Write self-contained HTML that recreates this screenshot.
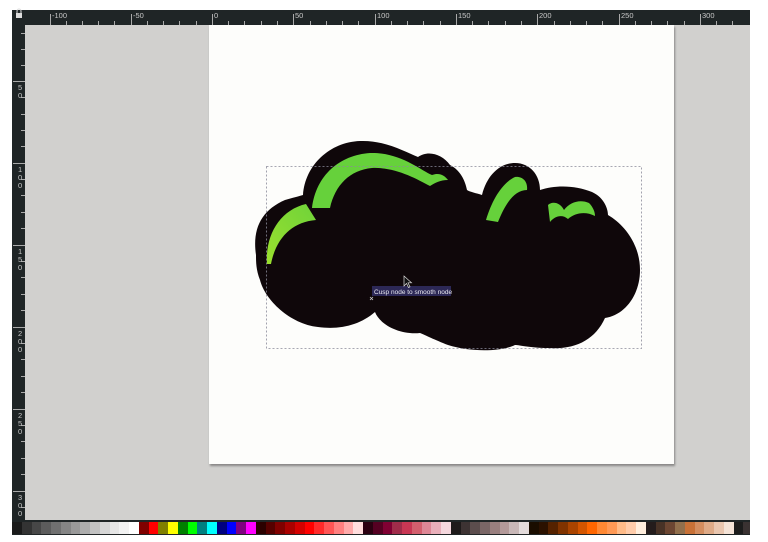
<!DOCTYPE html>
<html><head><style>
html,body{margin:0;padding:0;width:768px;height:542px;background:#fff;overflow:hidden;font-family:"Liberation Sans",sans-serif}
.frame{position:absolute;left:12px;top:10px;width:738px;height:525px;background:#1f2526}
.canvas{position:absolute;left:25px;top:25px;width:725px;height:495px;background:#d1d0ce}
.page{position:absolute;left:209px;top:25px;width:465px;height:439px;background:#fdfdfb;box-shadow:1px 2px 2px rgba(0,0,0,.35)}
.pal{position:absolute;left:12px;top:522px;height:12px;width:738px;display:flex;overflow:hidden}
.pal i{display:block;width:9.75px;height:12px;flex:none}
.rl{position:absolute;font-size:7.5px;color:#c8c8c8}
</style></head><body>
<div class="frame"></div>
<div class="canvas"></div>
<div class="page"></div>
<svg style="position:absolute;left:0;top:0" width="768" height="542">
<defs><linearGradient id="g1" x1="0" y1="1" x2="1" y2="0"><stop offset="0" stop-color="#9adf2e"/><stop offset="1" stop-color="#6fd33a"/></linearGradient></defs>
<rect x="16" y="13" width="6" height="5" fill="#ddd"/><path d="M17 13 v-2 a2 2 0 0 1 4 0 v2" stroke="#ddd" fill="none"/>
<path fill="#0f070a" d="M256,255 C252,228 262,210 285,200 C292,198 300,196 303,195 C305,165 330,142 360,141 C385,140 405,152 418,157 C428,150 442,154 450,165 C460,170 465,180 467,190 C470,192 476,193 482,195 C487,175 500,163 515,163 C530,163 540,175 540,190 C555,185 575,185 592,192 C605,198 608,210 608,215 C625,225 640,245 640,270 C640,295 625,315 605,318 C595,340 575,350 548,348 C530,348 520,345 515,345 C500,352 470,352 448,345 C435,340 425,335 420,333 C400,335 380,325 375,312 C360,325 340,330 318,327 C290,324 265,300 260,280 C256,270 256,262 256,255 Z"/>
<path fill="url(#g1)" d="M267,264 C265,235 280,210 306,204 L316,220 C292,222 276,238 271,264 Z"/>
<path fill="#66d13b" d="M312,208 C316,175 340,155 370,153 C400,152 420,170 432,175 C440,172 445,176 448,180 C440,180 435,183 430,186 C415,178 395,167 372,168 C350,170 335,185 330,208 Z"/>
<path fill="#66d13b" d="M486,220 C492,200 502,183 515,177 C523,176 528,182 527,190 C515,190 506,202 498,222 Z"/>
<path fill="#66d13b" d="M548,205 C552,201 560,202 564,210 C570,202 580,199 589,203 C593,207 595,212 595,216 C585,211 575,213 568,219 C562,214 555,216 550,222 Z"/>
<rect x="266.5" y="166.5" width="375" height="182" fill="none" stroke="#8a8a9a" stroke-width="0.8" stroke-dasharray="2,2"/>
<rect x="372" y="286" width="79" height="10" fill="#2c2856"/>
<text x="374" y="294" font-size="6.5" fill="#e8e8f0" font-family="Liberation Sans">Cusp node to smooth node</text>
<path d="M404 276 v10 l2.5-2.5 2 4 1.5-.7 -2-4 h3.5z" fill="#111" stroke="#ddd" stroke-width=".7"/>
<path d="M370 297 l3 3 M373 297 l-3 3" stroke="#ccc" stroke-width=".8"/>
<g stroke="#aaa" stroke-width="1">
<path d="M50.5 14v11M131.5 14v11M212.5 14v11M293.5 14v11M375.5 14v11M456.5 14v11M537.5 14v11M619.5 14v11M700.5 14v11"/>
<path d="M66.5 21v4M82.5 21v4M98.5 21v4M114.5 21v4M147.5 21v4M163.5 21v4M179.5 21v4M196.5 21v4M228.5 21v4M244.5 21v4M261.5 21v4M277.5 21v4M310.5 21v4M326.5 21v4M342.5 21v4M358.5 21v4M391.5 21v4M407.5 21v4M423.5 21v4M440.5 21v4M472.5 21v4M488.5 21v4M505.5 21v4M521.5 21v4M554.5 21v4M570.5 21v4M586.5 21v4M602.5 21v4M635.5 21v4M651.5 21v4M667.5 21v4M684.5 21v4M716.5 21v4M732.5 21v4"/>
<path d="M13 81.5h12M13 163.5h12M13 245.5h12M13 327.5h12M13 409.5h12M13 491.5h12"/>
<path d="M21 33.5h4M21 49.5h4M21 65.5h4M21 97.5h4M21 114.5h4M21 130.5h4M21 146.5h4M21 179.5h4M21 195.5h4M21 212.5h4M21 228.5h4M21 261.5h4M21 277.5h4M21 294.5h4M21 310.5h4M21 343.5h4M21 359.5h4M21 376.5h4M21 392.5h4M21 425.5h4M21 441.5h4M21 458.5h4M21 474.5h4M21 507.5h4"/>
</g>
</svg>
<div class="rl" style="left:52px;top:11px">-100</div>
<div class="rl" style="left:133px;top:11px">-50</div>
<div class="rl" style="left:214px;top:11px">0</div>
<div class="rl" style="left:295px;top:11px">50</div>
<div class="rl" style="left:377px;top:11px">100</div>
<div class="rl" style="left:458px;top:11px">150</div>
<div class="rl" style="left:539px;top:11px">200</div>
<div class="rl" style="left:621px;top:11px">250</div>
<div class="rl" style="left:702px;top:11px">300</div>
<div class="rl" style="left:18px;top:84px;line-height:8px">5<br>0</div>
<div class="rl" style="left:18px;top:166px;line-height:8px">1<br>0<br>0</div>
<div class="rl" style="left:18px;top:248px;line-height:8px">1<br>5<br>0</div>
<div class="rl" style="left:18px;top:330px;line-height:8px">2<br>0<br>0</div>
<div class="rl" style="left:18px;top:412px;line-height:8px">2<br>5<br>0</div>
<div class="rl" style="left:18px;top:494px;line-height:8px">3<br>0<br>0</div>
<div class="pal">
<i style="background:#1a1a1a"></i><i style="background:#333"></i><i style="background:#474747"></i><i style="background:#5c5c5c"></i><i style="background:#707070"></i><i style="background:#858585"></i><i style="background:#999"></i><i style="background:#adadad"></i><i style="background:#c2c2c2"></i><i style="background:#d6d6d6"></i><i style="background:#e6e6e6"></i><i style="background:#f2f2f2"></i><i style="background:#fff"></i>
<i style="background:#800000"></i><i style="background:#f00"></i><i style="background:#808000"></i><i style="background:#ff0"></i><i style="background:#008000"></i><i style="background:#0f0"></i><i style="background:#008080"></i><i style="background:#0ff"></i><i style="background:#000080"></i><i style="background:#00f"></i><i style="background:#800080"></i><i style="background:#f0f"></i>
<i style="background:#2b0000"></i><i style="background:#550000"></i><i style="background:#800000"></i><i style="background:#a00"></i><i style="background:#d40000"></i><i style="background:#f00"></i><i style="background:#ff2a2a"></i><i style="background:#f55"></i><i style="background:#ff8080"></i><i style="background:#faa"></i><i style="background:#fdd"></i>
<i style="background:#2b0011"></i><i style="background:#550022"></i><i style="background:#800033"></i><i style="background:#a02c4a"></i><i style="background:#c83754"></i><i style="background:#d35f6e"></i><i style="background:#de8796"></i><i style="background:#e9afba"></i><i style="background:#f4d7dd"></i>
<i style="background:#1e1a1a"></i><i style="background:#3d3333"></i><i style="background:#5c4d4d"></i><i style="background:#7a6666"></i><i style="background:#997f7f"></i><i style="background:#b39999"></i><i style="background:#c8b7b7"></i><i style="background:#e3dbdb"></i>
<i style="background:#1a0d00"></i><i style="background:#2b1100"></i><i style="background:#552200"></i><i style="background:#803300"></i><i style="background:#a40"></i><i style="background:#d45500"></i><i style="background:#f60"></i><i style="background:#f83"></i><i style="background:#f95"></i><i style="background:#fb8"></i><i style="background:#fca"></i><i style="background:#fed"></i>
<i style="background:#241c1c"></i><i style="background:#483226"></i><i style="background:#6c4632"></i><i style="background:#916f4c"></i><i style="background:#c87137"></i><i style="background:#d38d5f"></i><i style="background:#deaa87"></i><i style="background:#e9c6af"></i><i style="background:#f4e3d7"></i>
<i style="background:#1c1c1c"></i><i style="background:#3a3232"></i><i style="background:#584444"></i>
</div>
</body></html>
